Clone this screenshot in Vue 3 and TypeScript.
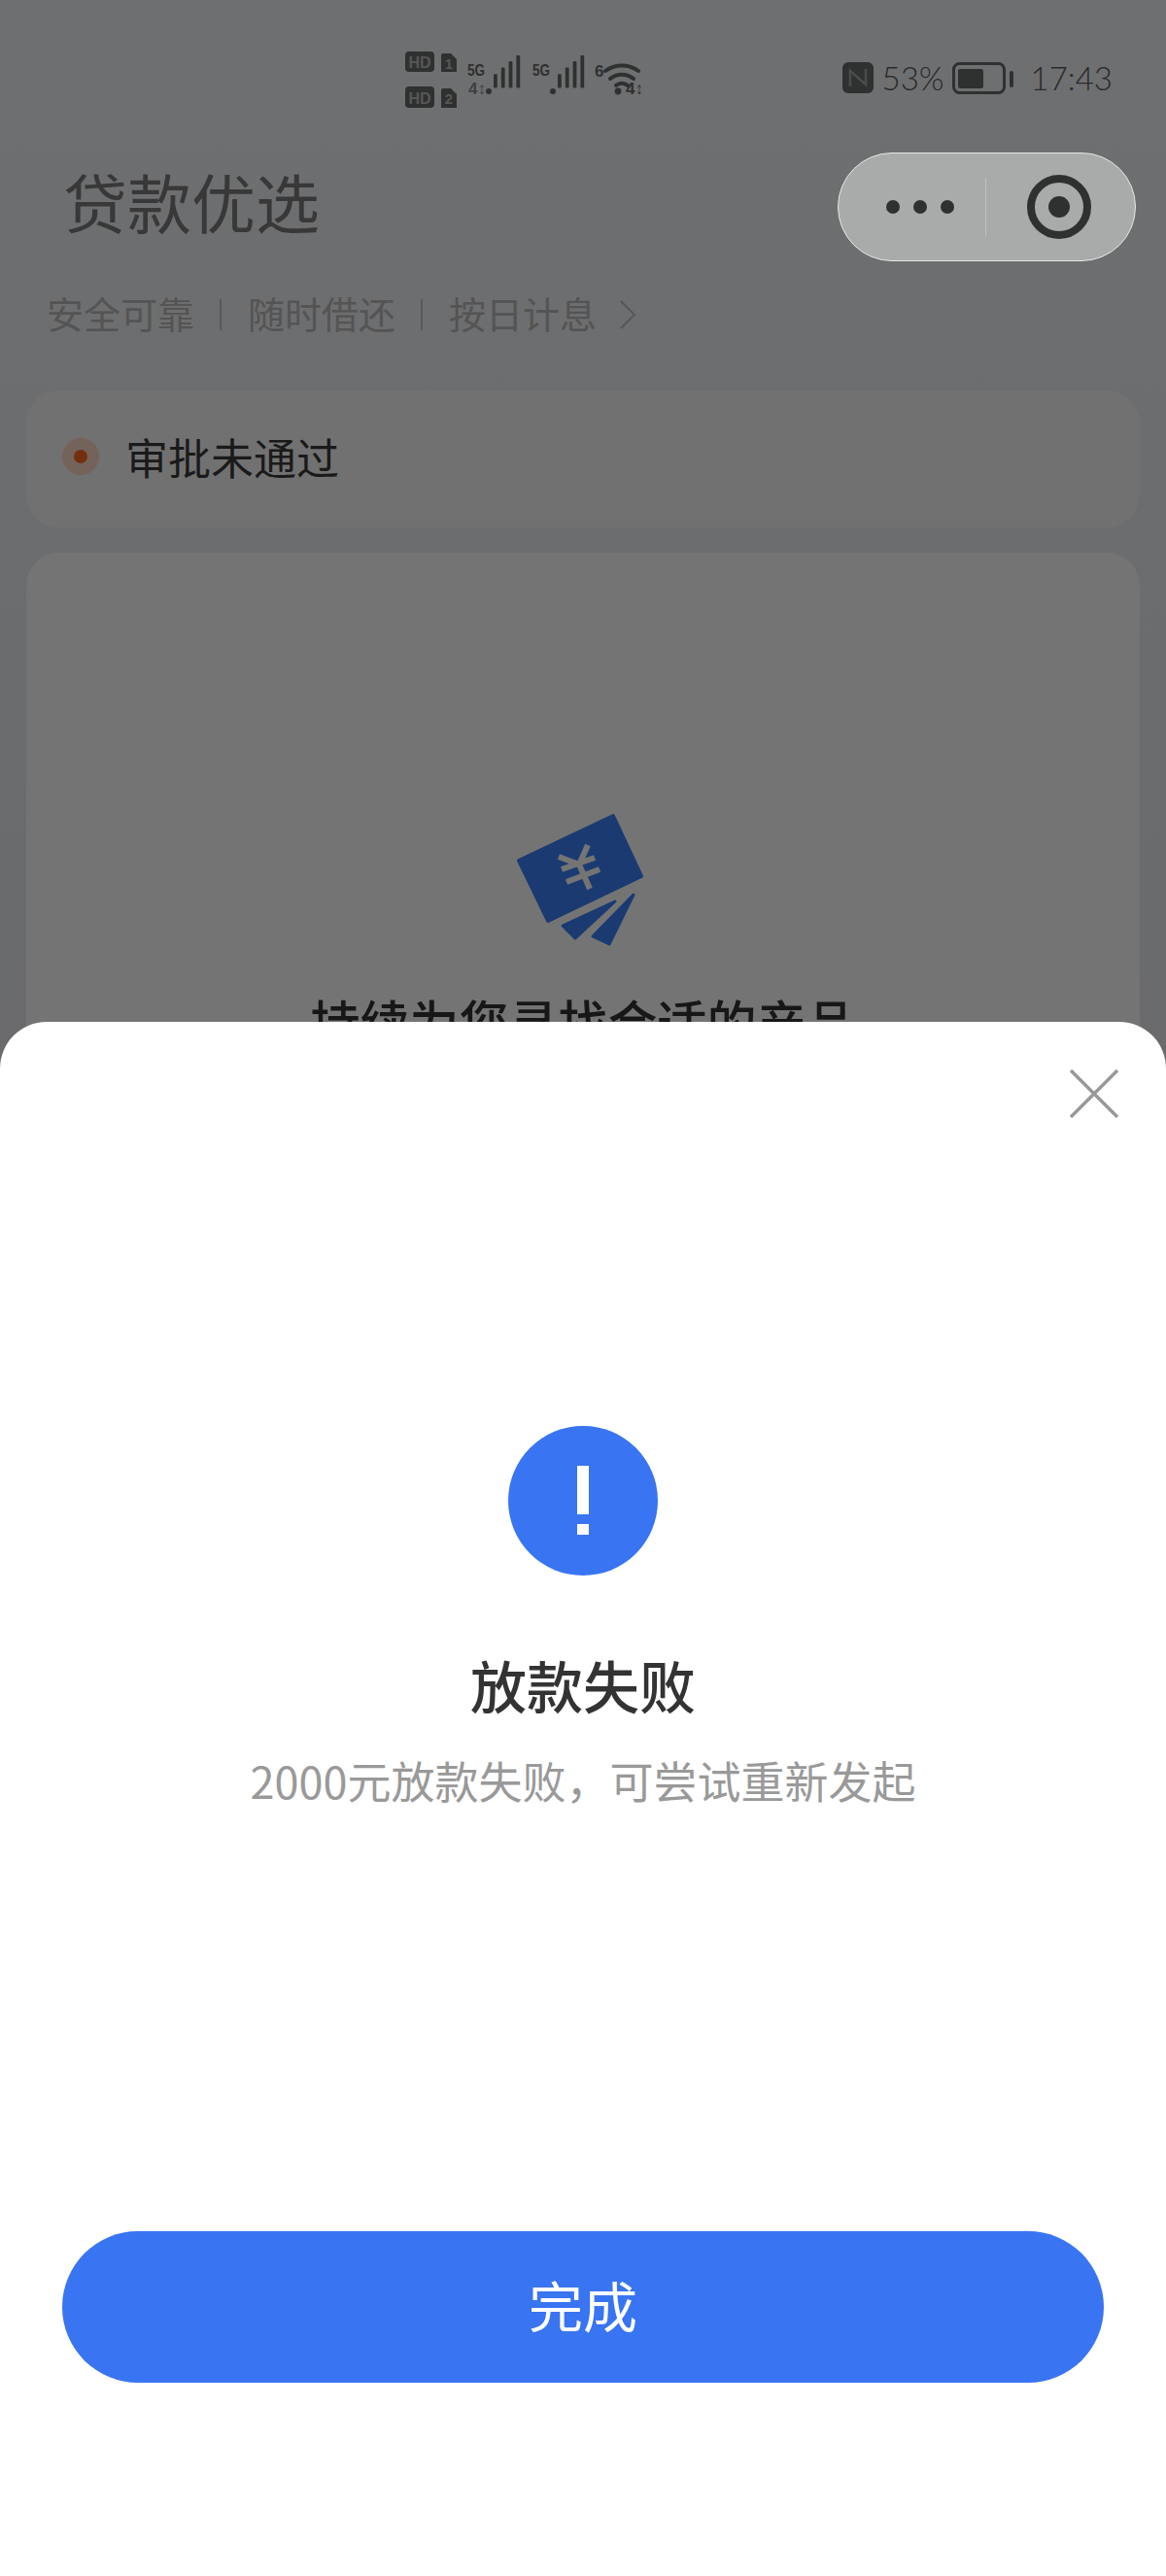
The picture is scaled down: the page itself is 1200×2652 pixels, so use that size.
<script setup lang="ts">
const tags: string[] = ['安全可靠', '随时借还', '按日计息']
const bars: number[][] = [
  [42, 62, 82, 100],
  [42, 62, 82, 100],
]
</script>

<template>
  <div class="screen">
    <div class="page">
      <div class="status">
        <svg class="net" width="250" height="60" viewBox="0 0 250 60">
          <g fill="#686a6a">
            <rect x="0" y="0" width="30" height="21" rx="4" />
            <rect x="0" y="36" width="30" height="22" rx="4" />
            <path d="M39 2h8l6 6v13H37V4a2 2 0 0 1 2-2zM39 38h8l6 6v14H37V40a2 2 0 0 1 2-2z" />
          </g>
          <g class="sim" fill="#bdbebe" text-anchor="middle">
            <text x="15" y="17">HD</text>
            <text x="15" y="53.5">HD</text>
            <text x="45" y="17.5" font-size="15">1</text>
            <text x="45" y="54" font-size="15">2</text>
          </g>
          <g class="gen" fill="#686a6a">
            <text x="64" y="25" textLength="18" lengthAdjust="spacingAndGlyphs">5G</text>
            <text x="131" y="25" textLength="18" lengthAdjust="spacingAndGlyphs">5G</text>
            <text x="195" y="26" font-size="17">6</text>
          </g>
          <text class="gen" x="65" y="44" fill="#8d8e8f" font-size="11">4↕</text>
          <text class="gen" x="227" y="44" fill="#686a6a" font-size="11">4↕</text>
          <g v-for="(row, i) in bars" :key="i" fill="#686a6a" :transform="`translate(${84 + i * 66} 0)`">
            <circle cx="2" cy="41" r="3" />
            <rect v-for="(h, j) in row" :key="j" :x="7 + j * 7.8" :y="4 + (100 - h) * 0.33" width="3.8" :height="33.5 - (100 - h) * 0.33" rx="1" />
          </g>
          <g fill="none" stroke="#686a6a" stroke-width="4" stroke-linecap="round">
            <path d="M206 20a29 29 0 0 1 34 0" />
            <path d="M211 28a19 19 0 0 1 24 0" />
            <path d="M217 35a9 9 0 0 1 12 0" />
          </g>
          <circle cx="219" cy="41" r="3.4" fill="#686a6a" />
        </svg>
        <div class="sys">
          <svg width="32" height="32" viewBox="0 0 32 32">
            <rect width="32" height="32" rx="6" fill="#686a6a" />
            <path d="M8 25V9l16 14V7" fill="none" stroke="#a5a6a6" stroke-width="2.5" />
          </svg>
          <span class="pct">53%</span>
          <svg class="batt" width="63" height="33" viewBox="0 0 63 33">
            <rect x="1.5" y="1.5" width="52" height="30" rx="6" fill="none" stroke="#686a6a" stroke-width="3" />
            <rect x="6" y="7" width="26" height="20" rx="2" fill="#686a6a" />
            <rect x="59" y="9" width="4" height="17" rx="2" fill="#686a6a" />
          </svg>
          <span class="time">17:43</span>
        </div>
      </div>

      <div class="title">贷款优选</div>
      <div class="tags">
        <template v-for="(tag, i) in tags" :key="tag">
          <i v-if="i" class="sep" />
          <span>{{ tag }}</span>
        </template>
        <svg class="more" width="18" height="30" viewBox="0 0 18 30">
          <path d="M2 1l14 14L2 29" fill="none" stroke="#bdbdbd" stroke-width="2" />
        </svg>
      </div>

      <div class="card state">
        <span class="dot" />
        <span class="state-text">审批未通过</span>
      </div>

      <div class="card result">
        <svg width="200" height="190" viewBox="0 0 200 190">
          <g fill="#3a80f8" stroke="#3a80f8" stroke-width="4" stroke-linejoin="round">
            <path d="M131 30L34 76L64 138L160 92Z" />
            <path d="M133 118L79 143L92 156Z" stroke-width="3" />
            <path d="M152 111L110 154L127 162Z" stroke-width="3" />
          </g>
          <path d="M75 72L96 80L105 60M96 80L107 105M78 85L112 73M83 98L117 85" fill="none" stroke="#fff" stroke-width="6" />
        </svg>
        <div class="hint">持续为您寻找合适的产品</div>
      </div>
    </div>

    <div class="mask" />

    <div class="capsule">
      <div class="dots"><i /><i /><i /></div>
      <i class="line" />
      <div class="ring"><i /></div>
    </div>

    <div class="sheet">
      <svg class="close" width="50" height="50" viewBox="0 0 50 50">
        <path d="M1 1l48 48M49 1L1 49" fill="none" stroke="#999" stroke-width="3.5" />
      </svg>
      <div class="alert"><i /><i /></div>
      <div class="head">放款失败</div>
      <div class="desc">2000元放款失败，可尝试重新发起</div>
      <button class="done" type="button">完成</button>
    </div>
  </div>
</template>

<style scoped>
.screen {
  position: relative;
  overflow: hidden;
  width: 1200px;
  height: 2652px;
  font-family: "Noto Sans CJK SC", "Noto Sans", sans-serif;
}

.page {
  height: 100%;
  background: linear-gradient(#f2f4f8, #e8eaee 1100px);
}

.status {
  display: flex;
  justify-content: space-between;
  box-sizing: border-box;
  height: 171px;
  padding: 53px 55px 0 417px;
}

.sim {
  font-family: "Liberation Sans", sans-serif;
  font-size: 16px;
  font-weight: 700;
}

.gen {
  font-family: "Liberation Sans", sans-serif;
  font-size: 17px;
  font-weight: 700;
}

.sys {
  display: flex;
  align-items: center;
  align-self: flex-start;
  height: 32px;
  margin-top: 11px;
}

.pct,
.time {
  font-family: Lato, sans-serif;
  font-size: 33px;
  font-weight: 300;
  line-height: 32px;
  color: #5c5c5c;
}

.pct {
  margin-left: 9px;
}

.batt {
  margin-left: 8px;
}

.time {
  margin-left: 18px;
}

.title {
  padding-left: 65px;
  font-size: 66px;
  line-height: 70px;
  color: #7c7c7c;
}

.tags {
  display: flex;
  align-items: center;
  height: 50px;
  margin-top: 55px;
  padding-left: 48px;
  font-size: 38px;
  color: #b9b9b9;
}

.sep {
  width: 2px;
  height: 32px;
  margin: 6px 27px 0 26px;
  background: #c4c4c4;
}

.more {
  margin-top: 6px;
  margin-left: 23px;
}

.card {
  margin: 0 27px;
  border-radius: 34px;
}

.state {
  display: flex;
  align-items: center;
  box-sizing: border-box;
  height: 141px;
  margin-top: 56px;
  padding-bottom: 6px;
  padding-left: 37px;
  font-size: 44px;
  color: #3a3a3a;
  background: #f9f9f9;
}

.state-text {
  margin-left: -3px;
}

.dot {
  width: 14px;
  height: 14px;
  margin-right: 30px;
  border: 12px solid #ffd9c9;
  border-radius: 50%;
  background: #ff6a1f;
  box-sizing: content-box;
}

.result {
  display: flex;
  flex-direction: column;
  align-items: center;
  height: 1400px;
  margin-top: 26px;
  padding-top: 241px;
  background: #fff;
}

.hint {
  margin-top: 21px;
  font-size: 51px;
  font-weight: 500;
  line-height: 60px;
  color: #333;
}

.mask {
  position: absolute;
  inset: 0;
  background: rgba(0, 0, 0, 0.545);
}

.capsule {
  position: absolute;
  top: 157px;
  right: 31px;
  display: flex;
  align-items: center;
  box-sizing: border-box;
  width: 307px;
  height: 112px;
  border: 1px solid #e6e6e6;
  border-radius: 56px;
  background: #a9abaa;
}

.dots {
  display: flex;
  gap: 14px;
  margin-left: 49px;
}

.dots i {
  width: 14px;
  height: 14px;
  border-radius: 50%;
  background: #2f3130;
}

.line {
  width: 1px;
  height: 60px;
  margin-left: 32px;
  background: #bfc1c0;
}

.ring {
  display: flex;
  align-items: center;
  justify-content: center;
  box-sizing: border-box;
  width: 66px;
  height: 66px;
  margin-left: 42px;
  border: 8px solid #2f3130;
  border-radius: 50%;
}

.ring i {
  width: 22px;
  height: 22px;
  border-radius: 50%;
  background: #2f3130;
}

.sheet {
  position: absolute;
  right: 0;
  bottom: 0;
  left: 0;
  display: flex;
  flex-direction: column;
  align-items: center;
  box-sizing: border-box;
  height: 1600px;
  padding: 416px 64px 199px;
  border-radius: 48px 48px 0 0;
  background: #fff;
}

.close {
  position: absolute;
  top: 49px;
  right: 49px;
}

.alert {
  display: flex;
  flex-direction: column;
  align-items: center;
  flex-shrink: 0;
  gap: 10px;
  box-sizing: border-box;
  width: 154px;
  height: 154px;
  padding-top: 41px;
  border-radius: 50%;
  background: #3974f2;
}

.alert i {
  width: 12px;
  height: 50px;
  background: #fff;
}

.alert i + i {
  height: 11px;
}

.head {
  margin-top: 72px;
  font-size: 58px;
  font-weight: 500;
  line-height: 80px;
  color: #333;
}

.desc {
  margin-top: 29px;
  font-size: 45px;
  line-height: 60px;
  color: #999;
}

.done {
  width: 100%;
  height: 156px;
  margin-top: auto;
  padding: 0 0 8px;
  border: 0;
  border-radius: 78px;
  font-family: inherit;
  font-size: 56px;
  color: #fff;
  background: #3974f2;
}
</style>
